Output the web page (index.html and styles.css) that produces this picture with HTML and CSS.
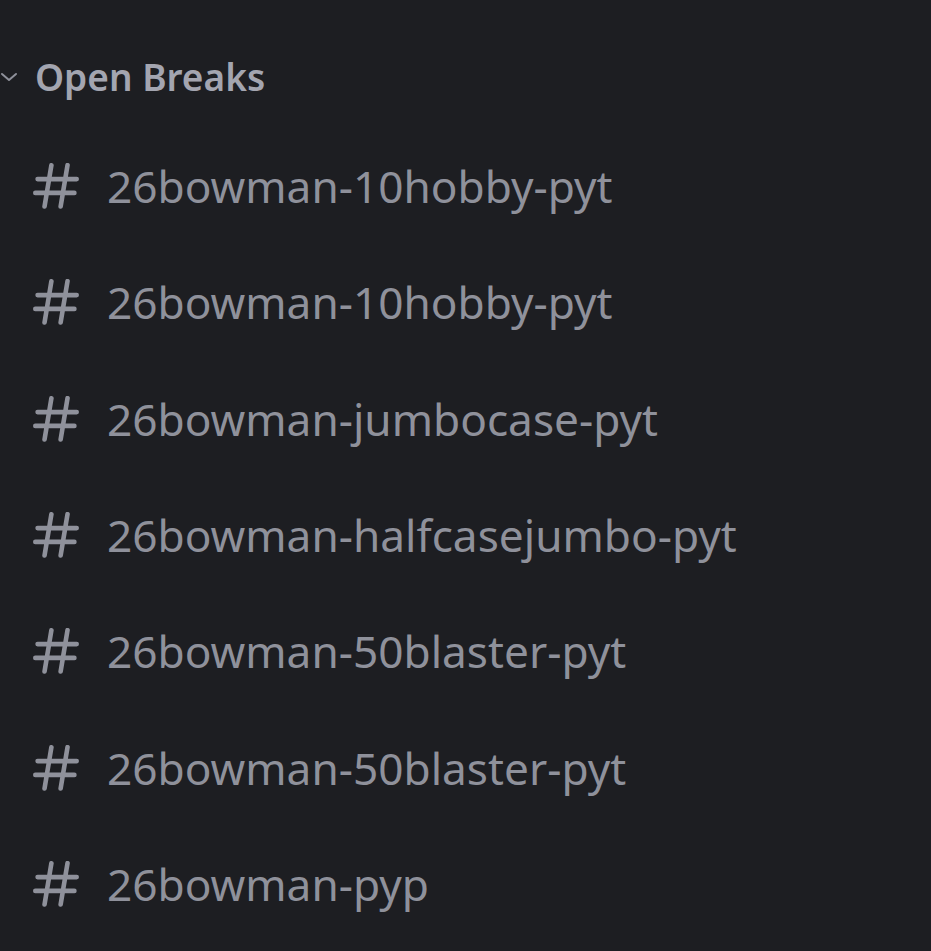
FILE: index.html
```html
<!DOCTYPE html>
<html>
<head>
<meta charset="utf-8">
<link rel="stylesheet" href="styles.css">
</head>
<body>
<div class="sidebar">
  <div class="category">
    <svg class="chevron" viewBox="0 0 18 10" width="18" height="10"><path d="M2 2 L9 8 L16 2" fill="none" stroke="currentColor" stroke-width="2" stroke-linecap="round" stroke-linejoin="round"/></svg>
    <span class="category-name">Open Breaks</span>
  </div>
  <ul class="channels">
    <li class="channel"><svg class="hash" viewBox="2 2 20 20"><path d="M10.99 3.16A1 1 0 1 0 9 2.84L8.15 8H4a1 1 0 0 0 0 2h3.82l-.67 4H3a1 1 0 1 0 0 2h3.82l-.8 4.84a1 1 0 0 0 1.97.32L8.85 16h4.97l-.8 4.84a1 1 0 0 0 1.97.32l.86-5.160H20a1 1 0 1 0 0-2h-3.82l.67-4H21a1 1 0 1 0 0-2h-3.820l.8-4.84a1 1 0 1 0-1.97-.32L15.15 8h-4.97l.8-4.84ZM14.15 14l.67-4H9.85l-.67 4h4.97Z"/></svg><span class="name">26bowman-10hobby-pyt</span></li>
    <li class="channel"><svg class="hash" viewBox="2 2 20 20"><path d="M10.99 3.16A1 1 0 1 0 9 2.84L8.15 8H4a1 1 0 0 0 0 2h3.82l-.67 4H3a1 1 0 1 0 0 2h3.82l-.8 4.84a1 1 0 0 0 1.97.32L8.85 16h4.97l-.8 4.84a1 1 0 0 0 1.97.32l.86-5.160H20a1 1 0 1 0 0-2h-3.82l.67-4H21a1 1 0 1 0 0-2h-3.820l.8-4.84a1 1 0 1 0-1.970-.32L15.15 8h-4.97l.8-4.84ZM14.15 14l.67-4H9.85l-.67 4h4.97Z"/></svg><span class="name">26bowman-10hobby-pyt</span></li>
    <li class="channel"><svg class="hash" viewBox="2 2 20 20"><path d="M10.99 3.16A1 1 0 1 0 9 2.84L8.15 8H4a1 1 0 0 0 0 2h3.82l-.67 4H3a1 1 0 1 0 0 2h3.82l-.8 4.84a1 1 0 0 0 1.97.32L8.85 16h4.97l-.8 4.84a1 1 0 0 0 1.97.32l.86-5.160H20a1 1 0 1 0 0-2h-3.82l.67-4H21a1 1 0 1 0 0-2h-3.820l.8-4.84a1 1 0 1 0-1.970-.32L15.15 8h-4.97l.8-4.84ZM14.15 14l.67-4H9.85l-.67 4h4.97Z"/></svg><span class="name">26bowman-jumbocase-pyt</span></li>
    <li class="channel"><svg class="hash" viewBox="2 2 20 20"><path d="M10.99 3.16A1 1 0 1 0 9 2.84L8.15 8H4a1 1 0 0 0 0 2h3.82l-.67 4H3a1 1 0 1 0 0 2h3.82l-.8 4.84a1 1 0 0 0 1.97.32L8.85 16h4.97l-.8 4.84a1 1 0 0 0 1.97.32l.86-5.160H20a1 1 0 1 0 0-2h-3.82l.67-4H21a1 1 0 1 0 0-2h-3.820l.8-4.84a1 1 0 1 0-1.970-.32L15.15 8h-4.97l.8-4.84ZM14.15 14l.67-4H9.85l-.67 4h4.97Z"/></svg><span class="name">26bowman-halfcasejumbo-pyt</span></li>
    <li class="channel"><svg class="hash" viewBox="2 2 20 20"><path d="M10.99 3.16A1 1 0 1 0 9 2.84L8.15 8H4a1 1 0 0 0 0 2h3.82l-.67 4H3a1 1 0 1 0 0 2h3.82l-.8 4.84a1 1 0 0 0 1.97.32L8.85 16h4.97l-.8 4.84a1 1 0 0 0 1.97.32l.86-5.160H20a1 1 0 1 0 0-2h-3.82l.67-4H21a1 1 0 1 0 0-2h-3.820l.8-4.84a1 1 0 1 0-1.970-.32L15.15 8h-4.97l.8-4.84ZM14.15 14l.67-4H9.85l-.67 4h4.97Z"/></svg><span class="name">26bowman-50blaster-pyt</span></li>
    <li class="channel"><svg class="hash" viewBox="2 2 20 20"><path d="M10.99 3.16A1 1 0 1 0 9 2.84L8.15 8H4a1 1 0 0 0 0 2h3.82l-.67 4H3a1 1 0 1 0 0 2h3.82l-.8 4.84a1 1 0 0 0 1.97.32L8.85 16h4.97l-.8 4.84a1 1 0 0 0 1.97.32l.86-5.160H20a1 1 0 1 0 0-2h-3.82l.67-4H21a1 1 0 1 0 0-2h-3.820l.8-4.84a1 1 0 1 0-1.970-.32L15.15 8h-4.97l.8-4.84ZM14.15 14l.67-4H9.85l-.67 4h4.97Z"/></svg><span class="name">26bowman-50blaster-pyt</span></li>
    <li class="channel"><svg class="hash" viewBox="2 2 20 20"><path d="M10.99 3.16A1 1 0 1 0 9 2.84L8.15 8H4a1 1 0 0 0 0 2h3.82l-.67 4H3a1 1 0 1 0 0 2h3.82l-.8 4.84a1 1 0 0 0 1.97.32L8.85 16h4.97l-.8 4.84a1 1 0 0 0 1.97.32l.86-5.160H20a1 1 0 1 0 0-2h-3.82l.67-4H21a1 1 0 1 0 0-2h-3.820l.8-4.84a1 1 0 1 0-1.970-.32L15.15 8h-4.97l.8-4.84ZM14.15 14l.67-4H9.85l-.67 4h4.97Z"/></svg><span class="name">26bowman-pyp</span></li>
  </ul>
</div>
</body>
</html>
```
FILE: styles.css
```css
html, body {
  margin: 0;
  padding: 0;
  background: #1d1e22;
}
body {
  width: 931px;
  height: 951px;
  overflow: hidden;
  font-family: "Noto Sans", "Open Sans", sans-serif;
}
.sidebar {
  padding-top: 50px;
}
.category {
  display: flex;
  align-items: center;
  gap: 17px;
  height: 52px;
  color: #a3a5b0;
}
.chevron {
  flex: none;
  margin-top: 2px;
  color: #8e909a;
}
.category-name {
  font-size: 37px;
  font-weight: 600;
}
.channels {
  list-style: none;
  margin: 0;
  padding: 0;
  margin-top: 26px;
}
.channel {
  display: flex;
  align-items: center;
  height: 116.3px;
  padding-left: 33px;
  gap: 28px;
  color: #8f919b;
}
.hash {
  flex: none;
  width: 46px;
  height: 46px;
  fill: currentColor;
  fill-rule: evenodd;
}
.name {
  font-size: 44.2px;
  font-weight: 400;
  line-height: 1;
}
```
